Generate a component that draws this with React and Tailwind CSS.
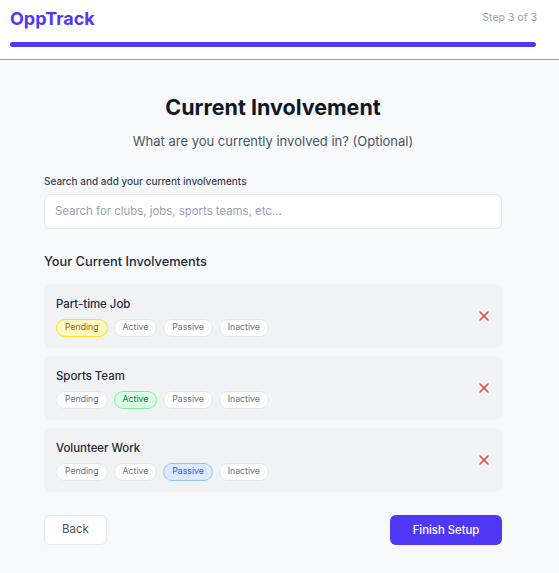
import React from "react";

const items = [
  { name: "Part-time Job", status: "Pending" },
  { name: "Sports Team", status: "Active" },
  { name: "Volunteer Work", status: "Passive" },
];

const statuses = ["Pending", "Active", "Passive", "Inactive"];

const selectedCls = {
  Pending: "bg-yellow-100 border-yellow-300 text-yellow-700",
  Active: "bg-green-100 border-green-300 text-green-700",
  Passive: "bg-blue-100 border-blue-300 text-blue-600",
  Inactive: "bg-gray-200 border-gray-300 text-gray-700",
};

function XIcon() {
  return (
    <svg width="12" height="12" viewBox="0 0 12 12" fill="none">
      <path d="M2 2L10 10M10 2L2 10" stroke="#e7404a" strokeWidth="1.6" strokeLinecap="round" />
    </svg>
  );
}

export default function App() {
  return (
    <div className="min-h-[573px] w-full bg-[#f8f9fb] text-gray-900" style={{ fontFamily: "Inter, 'Noto Sans', sans-serif" }}>
      <header className="w-full bg-white border-b border-gray-400">
        <div className="w-[547px] pl-2.5 pr-2.5 pt-1 pb-3">
          <div className="flex items-center justify-between h-7">
            <div className="text-[18px] font-bold text-indigo-600">OppTrack</div>
            <div className="text-[10.5px] text-gray-400">Step 3 of 3</div>
          </div>
          <div className="mt-2.5 h-[5px] w-[526px] rounded-full bg-indigo-600"></div>
        </div>
      </header>
      <main className="w-[546px]">
        <div className="w-[458px] mx-auto pt-[31px] pb-6">
          <h1 className="text-center text-[21.5px] leading-8 font-bold text-gray-900">Current Involvement</h1>
          <p className="mt-1.5 text-center text-[13px] leading-6 text-gray-600">What are you currently involved in? (Optional)</p>
          <label className="block mt-5 text-[10px] leading-4 font-medium text-gray-700">Search and add your current involvements</label>
          <div className="mt-[5px] h-[35px] w-full rounded-md border border-gray-200 bg-white flex items-center px-2.5 text-[11.4px] text-gray-400">
            Search for clubs, jobs, sports teams, etc...
          </div>
          <h2 className="mt-[22px] text-[12.8px] leading-[22px] font-medium text-gray-800">Your Current Involvements</h2>
          <div className="mt-[11px] flex flex-col gap-2">
            {items.map((it) => (
              <div key={it.name} className="h-[64px] rounded-md bg-[#f1f2f4] flex items-center justify-between pl-3 pr-2">
                <div className="flex flex-col">
                  <div className="text-[11.4px] leading-4 font-medium text-gray-800">{it.name}</div>
                  <div className="mt-[7px] flex gap-1.5">
                    {statuses.map((s) => (
                      <span
                        key={s}
                        className={
                          "h-[18px] px-2 rounded-full border text-[8.7px] flex items-center " +
                          (s === it.status ? selectedCls[s] : "bg-white border-gray-200 text-gray-500")
                        }
                      >
                        {s}
                      </span>
                    ))}
                  </div>
                </div>
                <button className="p-1">
                  <XIcon />
                </button>
              </div>
            ))}
          </div>
          <div className="mt-[23px] flex justify-between">
            <button className="h-[30px] w-[63px] rounded-md border border-gray-200 bg-white text-[11.5px] text-gray-600">Back</button>
            <button className="h-[30px] w-[112px] rounded-md bg-indigo-600 text-[11.3px] font-medium text-white">Finish Setup</button>
          </div>
        </div>
      </main>
    </div>
  );
}
